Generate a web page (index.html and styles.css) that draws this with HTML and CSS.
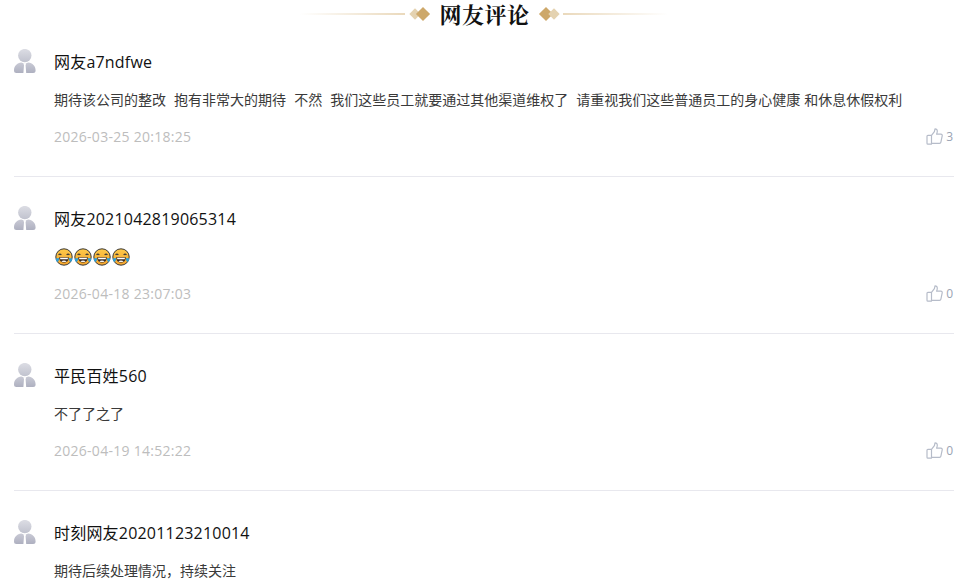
FILE: index.html
```html
<!DOCTYPE html>
<html lang="zh-CN">
<head>
<meta charset="utf-8">
<title>网友评论</title>
<link rel="stylesheet" href="styles.css">
</head>
<body>
<svg class="defs" width="0" height="0" aria-hidden="true">
  <defs>
    <linearGradient id="head" x1="0" y1="0" x2="0" y2="1"><stop offset="0" stop-color="#dcdde4"/><stop offset="1" stop-color="#c0c2ce"/></linearGradient>
    <linearGradient id="torso" x1="0" y1="0" x2="0" y2="1"><stop offset="0" stop-color="#c9cad5"/><stop offset="1" stop-color="#aeb0c0"/></linearGradient>
    <linearGradient id="face" x1="0" y1="0" x2="0" y2="1"><stop offset="0" stop-color="#fdc94a"/><stop offset="1" stop-color="#f6a52c"/></linearGradient>
    <symbol id="avatar" viewBox="0 0 24 25">
      <circle cx="10.800" cy="6.600" r="6.700" fill="url(#head)"/>
      <path d="M0 21.500c0-4.800 3.200-7.200 7.300-7.900l3.500 1.200 3.500-1.200c4.100.7 7.300 3.100 7.300 7.900 0 1.700-.9 2.500-2.400 2.500H2.400C.9 24 0 23.200 0 21.500z" fill="url(#torso)"/>
      <path d="M9.400 14.300h2.800l-.6 2 .6 7.700H9.400l.6-7.700z" fill="#fff"/>
    </symbol>
    <symbol id="thumb" viewBox="0 0 17 17">
      <path d="M5.500 7.300 8.400 3.600 9 .9c1.500-.1 2.300 1 2.300 2.300 0 1-.4 2-.7 3h4.300c.9 0 1.500.8 1.300 1.700l-1.300 6.300c-.1.700-.7 1.200-1.400 1.200H5.500zM5.500 7.300H1.900c-.5 0-.9.400-.9.900v7c0 .5.400.9.900.9h3.600z" fill="none" stroke="#b6bcc9" stroke-width="1.200" stroke-linejoin="round"/>
    </symbol>
    <symbol id="laugh" viewBox="0 0 18 18">
      <circle cx="9" cy="9" r="8.200" fill="url(#face)" stroke="#3a3a3a" stroke-width="1"/>
      <path d="M3.600 7c.7-1.200 2-1.200 2.700 0M11.700 7c.7-1.200 2-1.200 2.700 0" fill="none" stroke="#3a3a3a" stroke-width="1.100"/>
      <path d="M4.200 9.200h9.600c0 3.300-2 5.300-4.800 5.300s-4.800-2-4.800-5.300z" fill="#3a2a20"/>
      <path d="M5 9.700h8l-.3 1.500H5.300z" fill="#fff"/>
      <path d="M6.300 13.200c1.700-.9 3.700-.9 5.400 0-1.600 1.200-3.800 1.200-5.400 0z" fill="#f3f3f3"/>
      <path d="M.9 10.500 3.900 10c.4 1.700 0 3.400-1.200 3.700C1.400 14 .7 12 .9 10.500zM17.100 10.500 14.100 10c-.4 1.700 0 3.400 1.200 3.700 1.300.3 2-1.700 1.800-3.200z" fill="#2f9fd8"/>
    </symbol>
  </defs>
</svg>

<header class="title-bar">
  <span class="rule rule-left"></span>
  <span class="diamonds"><i class="dia dia-pale"></i><i class="dia dia-main"></i></span>
  <h2 class="title">网友评论</h2>
  <span class="diamonds"><i class="dia dia-main"></i><i class="dia dia-pale"></i></span>
  <span class="rule rule-right"></span>
</header>

<ul class="comments">
  <li class="comment">
    <svg class="avatar"><use href="#avatar"/></svg>
    <div class="body">
      <div class="name">网友a7ndfwe</div>
      <p class="text">期待该公司的整改&nbsp; 抱有非常大的期待&nbsp; 不然&nbsp; 我们这些员工就要通过其他渠道维权了&nbsp; 请重视我们这些普通员工的身心健康 和休息休假权利</p>
      <div class="meta"><time class="date">2026-03-25 20:18:25</time><span class="like"><svg class="thumb"><use href="#thumb"/></svg><span class="count">3</span></span></div>
    </div>
  </li>
  <li class="comment">
    <svg class="avatar"><use href="#avatar"/></svg>
    <div class="body">
      <div class="name">网友2021042819065314</div>
      <p class="text emojis"><svg class="emoji"><use href="#laugh"/></svg><svg class="emoji"><use href="#laugh"/></svg><svg class="emoji"><use href="#laugh"/></svg><svg class="emoji"><use href="#laugh"/></svg></p>
      <div class="meta"><time class="date">2026-04-18 23:07:03</time><span class="like"><svg class="thumb"><use href="#thumb"/></svg><span class="count">0</span></span></div>
    </div>
  </li>
  <li class="comment">
    <svg class="avatar"><use href="#avatar"/></svg>
    <div class="body">
      <div class="name">平民百姓560</div>
      <p class="text">不了了之了</p>
      <div class="meta"><time class="date">2026-04-19 14:52:22</time><span class="like"><svg class="thumb"><use href="#thumb"/></svg><span class="count">0</span></span></div>
    </div>
  </li>
  <li class="comment">
    <svg class="avatar"><use href="#avatar"/></svg>
    <div class="body">
      <div class="name">时刻网友20201123210014</div>
      <p class="text">期待后续处理情况，持续关注</p>
    </div>
  </li>
</ul>
</body>
</html>
```
FILE: styles.css
```css
* { box-sizing: border-box; }
html, body { margin: 0; padding: 0; height: 585px; overflow: hidden; background: #fff; }
body { font-family: "Open Sans", "Noto Sans CJK SC", sans-serif; color: #333; }
.defs { position: absolute; }

.title-bar { display: flex; align-items: center; justify-content: center; height: 28px; padding-right: 4px; }
.title { margin: 0 11px; font-family: "Noto Serif CJK SC", "Noto Sans CJK SC", serif; font-size: 22px; font-weight: 700; line-height: 28px; color: #111; letter-spacing: .5px; }
.rule { width: 105px; height: 2px; }
.rule-left { background: linear-gradient(90deg, rgba(228,205,165,0), #ead9bc); margin-right: 6px; }
.rule-right { background: linear-gradient(90deg, #ead9bc, rgba(228,205,165,0)); margin-left: 5px; }
.diamonds { display: flex; align-items: center; }
.dia { display: block; transform: rotate(45deg); }
.dia-main { width: 10px; height: 10px; background: #cda86a; }
.dia-pale { width: 8px; height: 8px; background: #e4d2b0; }
.dia-pale:first-child { margin-right: -1px; }
.dia-pale:last-child { margin-left: -1px; }

.comments { list-style: none; margin: 0; padding: 0 18px 0 14px; }
.comment { display: flex; height: 149px; margin-bottom: 8px; padding-top: 21px; border-bottom: 1px solid #e8e8ee; }
.comment:last-child { height: auto; margin-bottom: 0; border-bottom: 0; }
.avatar { flex: none; width: 24px; height: 25px; margin-right: 16px; }
.body { flex: 1; min-width: 0; }
.name { font-size: 16px; line-height: 26px; color: #111; letter-spacing: .2px; }
.text { margin: 12px 0 0; font-size: 14px; line-height: 26px; height: 26px; color: #3a3a3a; white-space: nowrap; word-spacing: .4px; }
.emojis { display: flex; align-items: center; gap: 1px; padding-left: 1px; }
.emoji { width: 18px; height: 18px; }
.meta { display: flex; align-items: center; justify-content: space-between; margin-top: 10px; height: 26px; }
.date { font-size: 14px; color: #bdbdbd; letter-spacing: .27px; }
.like { display: flex; align-items: center; gap: 3px; padding-right: 1px; }
.thumb { width: 17px; height: 17px; }
.count { font-size: 12px; color: #9aa3b3; }
```
